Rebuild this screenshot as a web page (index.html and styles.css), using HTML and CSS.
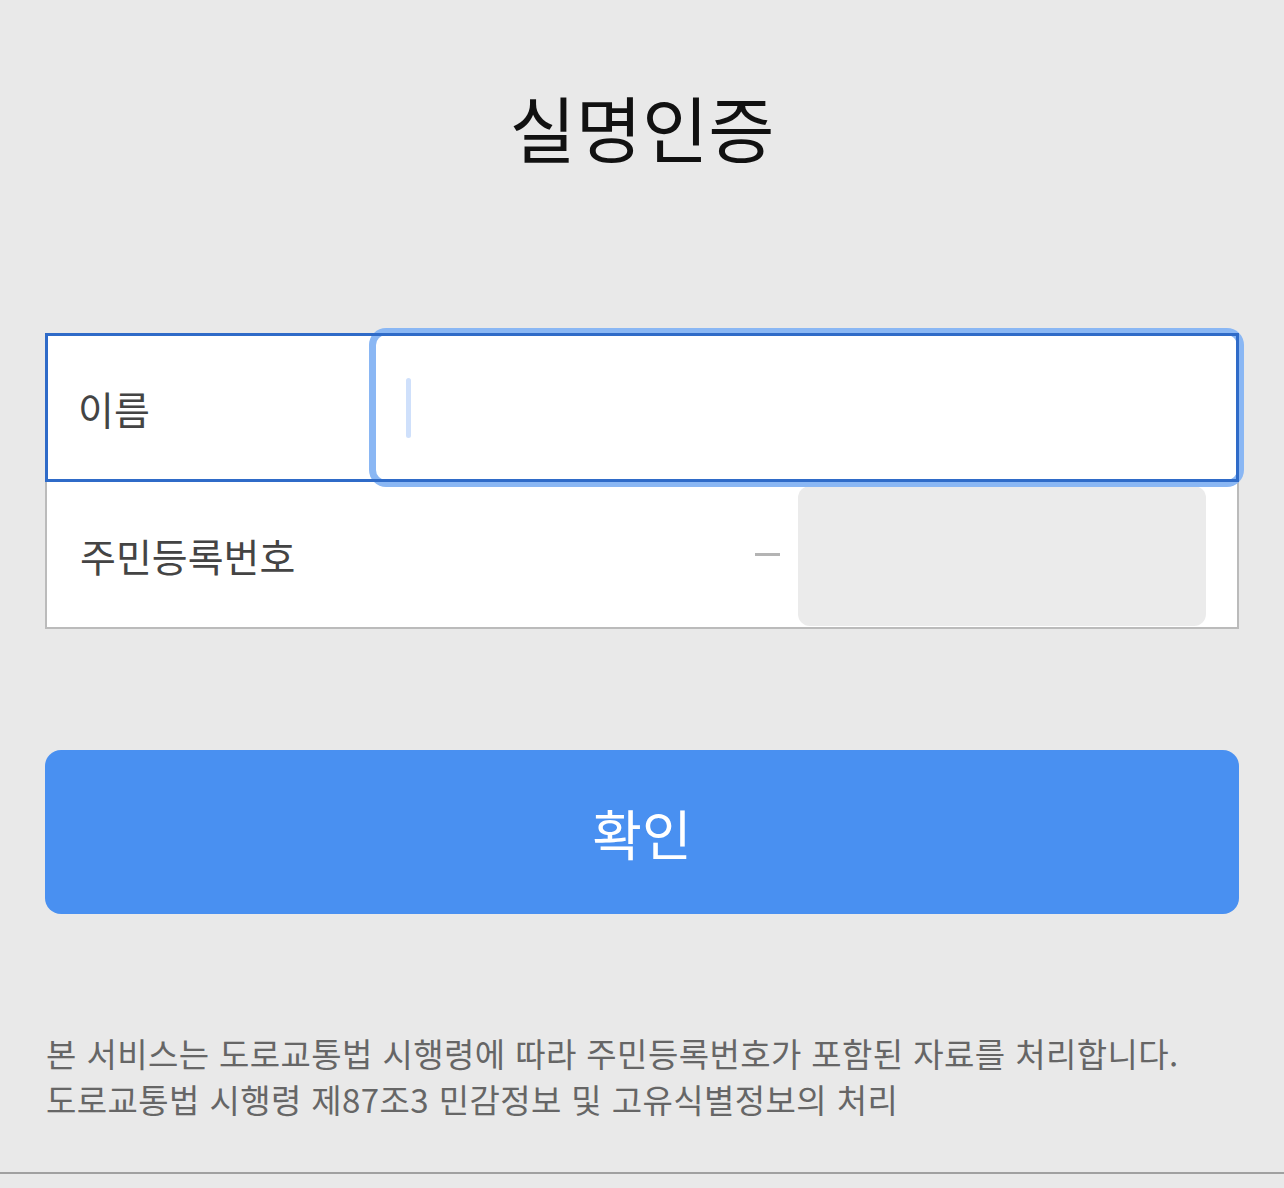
FILE: index.html
```html
<!DOCTYPE html>
<html lang="ko">
<head>
    <meta charset="UTF-8">
    <meta name="viewport" content="width=device-width, initial-scale=1.0">
    <title>실명인증</title>
    <link rel="stylesheet" href="styles.css">
</head>
<body>
    <main class="page">
        <h1 class="title">실명인증</h1>

        <div class="form">
            <div class="row row-active">
                <span class="label">이름</span>
                <div class="field field-focus">
                    <span class="caret"></span>
                </div>
            </div>
            <div class="row">
                <span class="label">주민등록번호</span>
                <div class="rrn">
                    <span class="dash"></span>
                    <div class="field field-disabled"></div>
                </div>
            </div>
        </div>

        <button type="button" class="confirm">확인</button>

        <p class="notice">
            본 서비스는 도로교통법 시행령에 따라 주민등록번호가 포함된 자료를 처리합니다.<br>
            도로교통법 시행령 제87조3 민감정보 및 고유식별정보의 처리
        </p>
    </main>
    <div class="bottom-line"></div>
</body>
</html>
```

FILE: styles.css
```css
body {
    margin: 0;
    background: #e9e9e9;
    font-family: "Noto Sans CJK KR", "Noto Sans", sans-serif;
    color: #333;
    height: 1188px;
    overflow: hidden;
}

.page {
    padding: 0 45px;
}

.title {
    margin: 0;
    padding-top: 76px;
    font-size: 72px;
    font-weight: 400;
    line-height: 100px;
    text-align: center;
    color: #111;
}

.form {
    margin-top: 157px;
}

.row {
    position: relative;
    display: flex;
    align-items: center;
    height: 145px;
    background: #fff;
    border: 2px solid #bbb;
    border-top: none;
}

/* sits above the second row so the focus ring spills over it */
.row-active {
    z-index: 1;
    border: none;
    height: 149px;
}

/* blue frame is drawn above the focus ring of the field */
.row-active::after {
    content: "";
    position: absolute;
    inset: 0;
    border: 3px solid #2f6bc8;
    pointer-events: none;
}

.label {
    flex: 0 0 auto;
    width: 298px;
    padding-left: 33px;
    font-size: 39px;
    color: #444;
}

.field {
    background: #fff;
    border-radius: 10px;
}

.field-focus {
    flex: 1;
    align-self: stretch;
    margin: 2px 2px 2px 0;
    display: flex;
    align-items: center;
    padding-left: 30px;
    box-shadow: 0 0 0 7px #8ab7f4;
}

.caret {
    width: 5px;
    height: 60px;
    border-radius: 3px;
    background: #cfe0fb;
}

.rrn {
    flex: 1;
    align-self: stretch;
    display: flex;
    align-items: center;
    justify-content: flex-end;
    padding-right: 31px;
}

.dash {
    width: 25px;
    height: 3px;
    background: #b4b4b4;
    margin-right: 18px;
}

.field-disabled {
    align-self: stretch;
    width: 408px;
    margin: 4px 0 1px;
    background: #ebebeb;
    border-radius: 12px;
}

.confirm {
    display: block;
    width: 100%;
    height: 164px;
    margin-top: 121px;
    border: none;
    border-radius: 16px;
    background: #4990f1;
    color: #fff;
    font-family: inherit;
    font-size: 54px;
    font-weight: 400;
}

.notice {
    margin: 116px 0 0;
    padding-left: 1px;
    font-size: 33px;
    letter-spacing: 0.4px;
    line-height: 46px;
    color: #666;
}

.bottom-line {
    position: absolute;
    left: 0;
    right: 0;
    top: 1172px;
    height: 2px;
    background: #a0a0a0;
}
```
